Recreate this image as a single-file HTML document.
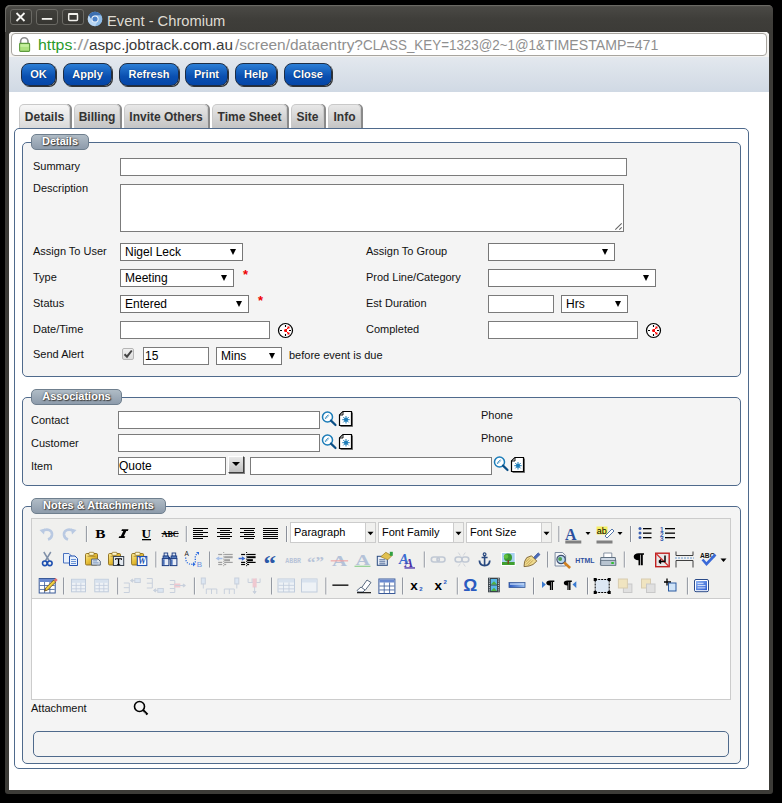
<!DOCTYPE html>
<html><head><meta charset="utf-8">
<style>
*{box-sizing:border-box;margin:0;padding:0}
html,body{width:782px;height:803px;overflow:hidden;background:#000;font-family:"Liberation Sans",sans-serif}
.a{position:absolute}
#win{left:5px;top:5px;width:768px;height:789px;background:#3c3b37;border-radius:5px 5px 3px 3px}
#tbar{left:5px;top:5px;width:768px;height:27px;border-radius:5px 5px 0 0;background:linear-gradient(#5b5a55 0,#4a4945 2px,#3f3e3a 14px,#3c3b37 27px);box-shadow:inset 1px 1px 0 #6a6964}
.wb{width:22px;height:16px;border:1px solid #6a6964;border-radius:3px;background:linear-gradient(#403f3b,#363531)}
#title{left:107px;top:13px;font-size:14.7px;color:#dfdbd2;white-space:pre}
#addr{left:9px;top:32px;width:760px;height:25px;background:#f4f3f1;clip-path:polygon(2px 0,758px 0,760px 2px,760px 25px,0 25px,0 2px)}
#abox{left:11px;top:33px;width:756px;height:23px;background:#fff;border:1px solid #a8a59f;border-radius:4px}
.u{transform-origin:0 0;top:37px;font-size:14.7px;white-space:pre;color:#8a8a8a}
#content{left:9px;top:57px;width:760px;height:733px;background:#fff}
#toolbar{left:9px;top:57px;width:760px;height:35px;background:linear-gradient(#e3e8ee,#d0d9e4)}
.btn{height:23px;top:63px;border-radius:8px;background:linear-gradient(#2b7ed6,#0a4fb0 60%,#0546a8);border:1px solid #1d2d45;box-shadow:1px 1px 0 #333;color:#fff;font-weight:bold;font-size:11px;text-align:center;line-height:21px;text-shadow:0 0 1px #001a40}
.tab{top:104px;height:24px;border:1px solid #c9c9c9;border-bottom:none;border-radius:5px 5px 0 0;background:linear-gradient(#e8e8e8,#c4c4c4);box-shadow:2px 0 0 #8a8a8a;font-weight:bold;font-size:12px;color:#333;line-height:24px;text-align:center}
.tab.act{background:linear-gradient(#f7f7f7,#d9d9d9)}
.panel{border:1px solid #4f6a8c;border-radius:5px}
.fs{border:1px solid #4f6a8c;border-radius:5px;background:#f4f4f4}
.lg{height:16px;border:1px solid #6f7f8e;border-radius:5px;background:linear-gradient(#b0bcc6,#8d9bab);color:#fff;font-weight:bold;font-size:11px;text-align:center;line-height:13px;text-shadow:0 0 2px #333,1px 1px 1px #444}
.lbl{font-size:11px;color:#111;white-space:pre}
.inp{background:#fff;border:1px solid #7b7b7b}
.sel{background:#fff;border:1px solid #777;font-size:12px;color:#000;padding-left:4px;line-height:17px;white-space:pre}
.arr{position:absolute;right:6px;top:5px;width:0;height:0;border-left:3.5px solid transparent;border-right:3.5px solid transparent;border-top:6px solid #000}
.ast{color:#e00;font-size:13px;font-weight:bold}
</style></head><body>
<div id="win" class="a"></div>
<div id="tbar" class="a"></div>
<div class="a wb" style="left:10px;top:9px"></div>
<div class="a wb" style="left:36px;top:9px"></div>
<div class="a wb" style="left:62px;top:9px"></div>
<div id="title" class="a">Event - Chromium</div>
<div id="addr" class="a"></div>
<div id="abox" class="a"></div>

<svg class="a" style="left:0;top:0" width="110" height="32" viewBox="0 0 110 32">
<path d="M16.5 13L24.5 21M24.5 13L16.5 21" stroke="#1e1d1b" stroke-width="3" opacity="0.5"/><path d="M16.5 13L24.5 21M24.5 13L16.5 21" stroke="#f6f5f2" stroke-width="1.9"/>
<rect x="41.8" y="18" width="10.4" height="1.8" fill="#f2f1ed"/>
<rect x="68.7" y="13.7" width="8.8" height="6.8" rx="1" fill="none" stroke="#f2f1ed" stroke-width="1.5"/><rect x="68.5" y="13" width="9.2" height="2" fill="#f2f1ed"/>
<circle cx="95" cy="19" r="7.2" fill="#9cc4ec"/><path d="M88.76 15.40 A7.2 7.2 0 0 1 101.24 15.40 L95.00 15.60 A3.4 3.4 0 0 0 92.06 20.70 Z" fill="#3d6fb0"/><path d="M101.24 15.40 A7.2 7.2 0 0 1 95.00 26.20 L97.94 20.70 A3.4 3.4 0 0 0 95.00 15.60 Z" fill="#8fbce8"/><path d="M95.00 26.20 A7.2 7.2 0 0 1 88.76 15.40 L92.06 20.70 A3.4 3.4 0 0 0 97.94 20.70 Z" fill="#b8d6f4"/><circle cx="95" cy="19" r="3.6" fill="#f4f8fc"/><circle cx="95" cy="19" r="2.6" fill="#4a80c8"/>
</svg>
<svg class="a" style="left:0;top:30px" width="40" height="26" viewBox="0 30 40 26"><path d="M20.6 44V41.5A3.7 3.7 0 0 1 28 41.5V44" fill="none" stroke="#8c8c8c" stroke-width="1.6"/><rect x="19.6" y="43.4" width="10" height="8" rx="0.8" fill="#aee27f" stroke="#5e9a3e" stroke-width="1.1"/><rect x="20.5" y="44.3" width="8.2" height="2.6" fill="#c6f09e"/></svg>
<div class="a u" style="left:37.5px;color:#2a9a2a;transform:scaleX(1.0786)">https</div><div class="a u" style="left:72.2px;color:#9a9a9a;transform:scaleX(1.3770)">://</div><div class="a u" style="left:89px;color:#3a3a3a;transform:scaleX(1.0375)">aspc.jobtrack.com.au</div><div class="a u" style="left:235px;color:#8f8f8f;transform:scaleX(1.0518)">/screen/dataentry?</div><div class="a u" style="left:363px;color:#8f8f8f;transform:scaleX(0.9114)">CLASS_KEY=1323@2~1@1&amp;</div><div class="a u" style="left:545px;color:#8f8f8f;transform:scaleX(0.9626)">TIMESTAMP=471</div>
<div id="content" class="a"></div>
<div id="toolbar" class="a"></div>

<div class="a btn" style="left:21px;width:35px">OK</div>
<div class="a btn" style="left:63px;width:49px">Apply</div>
<div class="a btn" style="left:119px;width:60px">Refresh</div>
<div class="a btn" style="left:185px;width:43px">Print</div>
<div class="a btn" style="left:235px;width:42px">Help</div>
<div class="a btn" style="left:284px;width:48px">Close</div>

<div class="a tab act" style="left:19px;width:51px">Details</div>
<div class="a tab" style="left:74px;width:46px">Billing</div>
<div class="a tab" style="left:124px;width:84px">Invite Others</div>
<div class="a tab" style="left:212px;width:75px">Time Sheet</div>
<div class="a tab" style="left:291px;width:33px">Site</div>
<div class="a tab" style="left:328px;width:33px">Info</div>

<div class="a panel" style="left:14px;top:128px;width:735px;height:641px"></div>

<!-- Details fieldset -->
<div class="a fs" style="left:22px;top:142px;width:719px;height:235px"></div>
<div class="a lg" style="left:31px;top:134px;width:58px">Details</div>

<div class="a lbl" style="left:33px;top:160px">Summary</div>
<div class="a inp" style="left:120px;top:158px;width:507px;height:18px"></div>
<div class="a lbl" style="left:33px;top:182px">Description</div>
<div class="a inp" style="left:120px;top:184px;width:504px;height:48px"></div>

<div class="a lbl" style="left:33px;top:245px">Assign To User</div>
<div class="a sel" style="left:120px;top:243px;width:123px;height:18px">Nigel Leck<i class="arr"></i></div>
<div class="a lbl" style="left:33px;top:271px">Type</div>
<div class="a sel" style="left:120px;top:269px;width:114px;height:18px">Meeting<i class="arr"></i></div>
<div class="a ast" style="left:243px;top:267px">*</div>
<div class="a lbl" style="left:33px;top:297px">Status</div>
<div class="a sel" style="left:120px;top:295px;width:129px;height:18px">Entered<i class="arr"></i></div>
<div class="a ast" style="left:258px;top:293px">*</div>
<div class="a lbl" style="left:33px;top:323px">Date/Time</div>
<div class="a inp" style="left:120px;top:321px;width:150px;height:18px"></div>
<div class="a lbl" style="left:33px;top:348px">Send Alert</div>
<div class="a inp" style="left:143px;top:347px;width:66px;height:18px;font-size:12px;line-height:16px;padding-left:1px">15</div>
<div class="a sel" style="left:216px;top:347px;width:66px;height:18px">Mins<i class="arr"></i></div>
<div class="a lbl" style="left:289px;top:349px">before event is due</div>

<div class="a lbl" style="left:366px;top:245px">Assign To Group</div>
<div class="a sel" style="left:488px;top:243px;width:127px;height:18px"><i class="arr"></i></div>
<div class="a lbl" style="left:366px;top:271px">Prod Line/Category</div>
<div class="a sel" style="left:488px;top:269px;width:168px;height:18px"><i class="arr"></i></div>
<div class="a lbl" style="left:366px;top:297px">Est Duration</div>
<div class="a inp" style="left:488px;top:295px;width:66px;height:18px"></div>
<div class="a sel" style="left:561px;top:295px;width:67px;height:18px">Hrs<i class="arr"></i></div>
<div class="a lbl" style="left:366px;top:323px">Completed</div>
<div class="a inp" style="left:488px;top:321px;width:150px;height:18px"></div>
<svg class="a" style="left:277px;top:322px" width="17" height="17" viewBox="0 0 17 17"><circle cx="8.5" cy="8.5" r="7" fill="#fff" stroke="#000" stroke-width="1.2"/><path d="M8.5 3v2M8.5 12v2M3 8.5h2M12 8.5h2" stroke="#000" stroke-width="1.1"/><path d="M8.5 8.5L11.5 5.5M8.5 8.5L11.5 11.5" stroke="#f00" stroke-width="1"/><circle cx="8.5" cy="8.5" r="1.5" fill="#f00"/><rect x="10.5" y="4.5" width="2" height="2" fill="#f00"/><rect x="10.5" y="10.5" width="2" height="2" fill="#f00"/></svg><svg class="a" style="left:645px;top:322px" width="17" height="17" viewBox="0 0 17 17"><circle cx="8.5" cy="8.5" r="7" fill="#fff" stroke="#000" stroke-width="1.2"/><path d="M8.5 3v2M8.5 12v2M3 8.5h2M12 8.5h2" stroke="#000" stroke-width="1.1"/><path d="M8.5 8.5L11.5 5.5M8.5 8.5L11.5 11.5" stroke="#f00" stroke-width="1"/><circle cx="8.5" cy="8.5" r="1.5" fill="#f00"/><rect x="10.5" y="4.5" width="2" height="2" fill="#f00"/><rect x="10.5" y="10.5" width="2" height="2" fill="#f00"/></svg>
<div class="a" style="left:122px;top:348px;width:12px;height:12px;border:1px solid #b5b5b5;border-radius:2px;background:linear-gradient(#f0f0f0,#dcdcdc)"></div>
<svg class="a" style="left:122px;top:348px" width="12" height="12" viewBox="0 0 12 12"><path d="M2.5 6.2L5 8.7L9.8 2.5" fill="none" stroke="#444" stroke-width="2"/></svg>
<svg class="a" style="left:612px;top:220px" width="11" height="11" viewBox="0 0 11 11"><path d="M3.3 9.7L9.7 3.3M7.3 9.7L9.7 7.3" stroke="#666" stroke-width="1.1"/></svg>

<div class="a fs" style="left:22px;top:397px;width:719px;height:89px"></div>
<div class="a lg" style="left:31px;top:389px;width:91px">Associations</div>
<div class="a lbl" style="left:31px;top:414px">Contact</div>
<div class="a inp" style="left:118px;top:411px;width:202px;height:18px"></div>
<div class="a lbl" style="left:31px;top:437px">Customer</div>
<div class="a inp" style="left:118px;top:434px;width:202px;height:18px"></div>
<div class="a lbl" style="left:31px;top:460px">Item</div>
<div class="a inp" style="left:118px;top:457px;width:108px;height:18px;font-size:12px;line-height:16px;padding-left:0px;color:#000">Quote</div>
<div class="a" style="left:228px;top:456px;width:16px;height:17px;background:linear-gradient(#e8e8e8,#c0c0c0);border:1px solid;border-color:#fff #404040 #404040 #fff;box-shadow:1px 1px 0 #808080"></div>
<div class="a" style="left:232px;top:462px;width:0;height:0;border-left:4px solid transparent;border-right:4px solid transparent;border-top:4px solid #000"></div>
<div class="a inp" style="left:250px;top:457px;width:242px;height:18px"></div>
<div class="a lbl" style="left:481px;top:409px">Phone</div>
<div class="a lbl" style="left:481px;top:432px">Phone</div>
<svg class="a" style="left:321px;top:411px" width="17" height="17" viewBox="0 0 17 17"><circle cx="6.5" cy="6" r="5" fill="#fff" stroke="#1b7cb8" stroke-width="1.5"/><path d="M4.2 7.5L7.8 3.9" stroke="#1b7cb8" stroke-width="1.6" stroke-dasharray="1 0.6"/><path d="M10 9.6L14.5 14" stroke="#0b4f86" stroke-width="2.2" stroke-linecap="round"/></svg><svg class="a" style="left:338px;top:410px" width="16" height="17" viewBox="0 0 16 17"><path d="M5 1.5H13.5V15.5H1.5V5Z" fill="#fff" stroke="#000" stroke-width="1.2"/><path d="M14.5 2.5V16.5H2.5" fill="none" stroke="#000" stroke-width="1" opacity="0.55"/><path d="M1.5 5L5 1.5V5Z" fill="#e8e8e8" stroke="#000" stroke-width="0.9"/><g stroke="#1b7cb8" stroke-width="1"><path d="M8 6V13.5M4.3 9.7H11.7M5.3 7L10.7 12.4M10.7 7L5.3 12.4"/></g><circle cx="8" cy="9.7" r="2" fill="#1b7cb8"/></svg><svg class="a" style="left:321px;top:434px" width="17" height="17" viewBox="0 0 17 17"><circle cx="6.5" cy="6" r="5" fill="#fff" stroke="#1b7cb8" stroke-width="1.5"/><path d="M4.2 7.5L7.8 3.9" stroke="#1b7cb8" stroke-width="1.6" stroke-dasharray="1 0.6"/><path d="M10 9.6L14.5 14" stroke="#0b4f86" stroke-width="2.2" stroke-linecap="round"/></svg><svg class="a" style="left:338px;top:433px" width="16" height="17" viewBox="0 0 16 17"><path d="M5 1.5H13.5V15.5H1.5V5Z" fill="#fff" stroke="#000" stroke-width="1.2"/><path d="M14.5 2.5V16.5H2.5" fill="none" stroke="#000" stroke-width="1" opacity="0.55"/><path d="M1.5 5L5 1.5V5Z" fill="#e8e8e8" stroke="#000" stroke-width="0.9"/><g stroke="#1b7cb8" stroke-width="1"><path d="M8 6V13.5M4.3 9.7H11.7M5.3 7L10.7 12.4M10.7 7L5.3 12.4"/></g><circle cx="8" cy="9.7" r="2" fill="#1b7cb8"/></svg><svg class="a" style="left:493px;top:456px" width="17" height="17" viewBox="0 0 17 17"><circle cx="6.5" cy="6" r="5" fill="#fff" stroke="#1b7cb8" stroke-width="1.5"/><path d="M4.2 7.5L7.8 3.9" stroke="#1b7cb8" stroke-width="1.6" stroke-dasharray="1 0.6"/><path d="M10 9.6L14.5 14" stroke="#0b4f86" stroke-width="2.2" stroke-linecap="round"/></svg><svg class="a" style="left:510px;top:456px" width="16" height="17" viewBox="0 0 16 17"><path d="M5 1.5H13.5V15.5H1.5V5Z" fill="#fff" stroke="#000" stroke-width="1.2"/><path d="M14.5 2.5V16.5H2.5" fill="none" stroke="#000" stroke-width="1" opacity="0.55"/><path d="M1.5 5L5 1.5V5Z" fill="#e8e8e8" stroke="#000" stroke-width="0.9"/><g stroke="#1b7cb8" stroke-width="1"><path d="M8 6V13.5M4.3 9.7H11.7M5.3 7L10.7 12.4M10.7 7L5.3 12.4"/></g><circle cx="8" cy="9.7" r="2" fill="#1b7cb8"/></svg><!--NOTES-->
<div class="a fs" style="left:22px;top:506px;width:719px;height:258px"></div>
<div class="a lg" style="left:31px;top:498px;width:135px">Notes &amp; Attachments</div>
<div class="a" style="left:31px;top:518px;width:700px;height:182px;background:#f0f0ee;border:1px solid #ccc"></div>
<div class="a" style="left:31px;top:598px;width:700px;height:102px;background:#fff;border:1px solid #ccc"></div>
<div class="a lbl" style="left:31px;top:702px">Attachment</div>
<svg class="a" style="left:133px;top:700px" width="16" height="16" viewBox="0 0 16 16"><circle cx="6.5" cy="6.5" r="5" fill="none" stroke="#000" stroke-width="1.6"/><path d="M10 10L14.5 14.5" stroke="#000" stroke-width="2.2"/><path d="M10.5 11.5L13 14" stroke="#888" stroke-width="0.8"/></svg>
<div class="a" style="left:33px;top:731px;width:696px;height:26px;border:1px solid #4f6a8c;border-radius:5px;background:#f4f4f4"></div>
<div class="a" style="left:290px;top:522px;width:76px;height:21px;background:#fff;border:1px solid #ccc;font-size:11px;line-height:18px;padding-left:3px;color:#000;white-space:pre">Paragraph</div><div class="a" style="left:365px;top:522px;width:11px;height:21px;background:#f0f0ee;border:1px solid #ccc"></div><div class="a" style="left:378px;top:522px;width:76px;height:21px;background:#fff;border:1px solid #ccc;font-size:11px;line-height:18px;padding-left:3px;color:#000;white-space:pre">Font Family</div><div class="a" style="left:453px;top:522px;width:11px;height:21px;background:#f0f0ee;border:1px solid #ccc"></div><div class="a" style="left:466px;top:522px;width:76px;height:21px;background:#fff;border:1px solid #ccc;font-size:11px;line-height:18px;padding-left:3px;color:#000;white-space:pre">Font Size</div><div class="a" style="left:541px;top:522px;width:11px;height:21px;background:#f0f0ee;border:1px solid #ccc"></div><svg class="a" style="left:0;top:0" width="782" height="803" viewBox="0 0 782 803"><rect x="85.9" y="526" width="1" height="16" fill="#8a8f99"/><rect x="86.9" y="526" width="1" height="16" fill="#fff" opacity="0.6"/><rect x="185.8" y="526" width="1" height="16" fill="#8a8f99"/><rect x="186.8" y="526" width="1" height="16" fill="#fff" opacity="0.6"/><rect x="286.0" y="526" width="1" height="16" fill="#8a8f99"/><rect x="287.0" y="526" width="1" height="16" fill="#fff" opacity="0.6"/><rect x="558.4" y="526" width="1" height="16" fill="#8a8f99"/><rect x="559.4" y="526" width="1" height="16" fill="#fff" opacity="0.6"/><rect x="630.0" y="526" width="1" height="16" fill="#8a8f99"/><rect x="631.0" y="526" width="1" height="16" fill="#fff" opacity="0.6"/><rect x="155.4" y="551.5" width="1" height="16.0" fill="#8a8f99"/><rect x="156.4" y="551.5" width="1" height="16.0" fill="#fff" opacity="0.6"/><rect x="209.1" y="551.5" width="1" height="16.0" fill="#8a8f99"/><rect x="210.1" y="551.5" width="1" height="16.0" fill="#fff" opacity="0.6"/><rect x="423.8" y="551.5" width="1" height="16.0" fill="#8a8f99"/><rect x="424.8" y="551.5" width="1" height="16.0" fill="#fff" opacity="0.6"/><rect x="547.1" y="551.5" width="1" height="16.0" fill="#8a8f99"/><rect x="548.1" y="551.5" width="1" height="16.0" fill="#fff" opacity="0.6"/><rect x="623.8" y="551.5" width="1" height="16.0" fill="#8a8f99"/><rect x="624.8" y="551.5" width="1" height="16.0" fill="#fff" opacity="0.6"/><rect x="63.1" y="577.5" width="1" height="17.0" fill="#8a8f99"/><rect x="64.1" y="577.5" width="1" height="17.0" fill="#fff" opacity="0.6"/><rect x="117.2" y="577.5" width="1" height="17.0" fill="#8a8f99"/><rect x="118.2" y="577.5" width="1" height="17.0" fill="#fff" opacity="0.6"/><rect x="193.9" y="577.5" width="1" height="17.0" fill="#8a8f99"/><rect x="194.9" y="577.5" width="1" height="17.0" fill="#fff" opacity="0.6"/><rect x="271.1" y="577.5" width="1" height="17.0" fill="#8a8f99"/><rect x="272.1" y="577.5" width="1" height="17.0" fill="#fff" opacity="0.6"/><rect x="325.4" y="577.5" width="1" height="17.0" fill="#8a8f99"/><rect x="326.4" y="577.5" width="1" height="17.0" fill="#fff" opacity="0.6"/><rect x="402.1" y="577.5" width="1" height="17.0" fill="#8a8f99"/><rect x="403.1" y="577.5" width="1" height="17.0" fill="#fff" opacity="0.6"/><rect x="456.8" y="577.5" width="1" height="17.0" fill="#8a8f99"/><rect x="457.8" y="577.5" width="1" height="17.0" fill="#fff" opacity="0.6"/><rect x="533.0" y="577.5" width="1" height="17.0" fill="#8a8f99"/><rect x="534.0" y="577.5" width="1" height="17.0" fill="#fff" opacity="0.6"/><rect x="587.0" y="577.5" width="1" height="17.0" fill="#8a8f99"/><rect x="588.0" y="577.5" width="1" height="17.0" fill="#fff" opacity="0.6"/><rect x="686.9" y="577.5" width="1" height="17.0" fill="#8a8f99"/><rect x="687.9" y="577.5" width="1" height="17.0" fill="#fff" opacity="0.6"/><g transform="translate(39.5,527.5)"><path d="M3 3.5 C8 0.5 13 3 12.5 7.5 C12 10.5 10 11.5 8.5 12" fill="none" stroke="#b9c9e2" stroke-width="2.6"/><path d="M0 2.5 L5.5 1 L4.5 7 Z" fill="#b9c9e2"/></g><g transform="translate(64,527.5)"><path d="M9.5 3.5 C4.5 0.5 -0.5 3 0 7.5 C0.5 10.5 2.5 11.5 4 12" fill="none" stroke="#b9c9e2" stroke-width="2.6"/><path d="M12.5 2.5 L7 1 L8 7 Z" fill="#b9c9e2"/></g><text x="95.2" y="538.2" font-family="Liberation Serif" font-weight="bold" font-size="12.5" fill="#000" textLength="10.2" lengthAdjust="spacingAndGlyphs">B</text><path d="M122 529.3 H128.5 L127.8 531 H126.3 L123.8 536.2 H125.3 L124.6 538 H118.6 L119.3 536.2 H120.8 L123.3 531 H121.3 Z" fill="#000"/><text x="141.6" y="537.8" font-family="Liberation Serif" font-weight="bold" font-size="12.5" fill="#000" textLength="9.5" lengthAdjust="spacingAndGlyphs">U</text><rect x="142" y="539" width="9" height="1.3" fill="#000"/><text x="161.7" y="537" font-family="Liberation Serif" font-weight="bold" font-size="8.5" fill="#000" textLength="17" lengthAdjust="spacingAndGlyphs">ABC</text><rect x="161.5" y="533" width="17.2" height="1" fill="#000"/><rect x="193" y="528" width="15" height="1" fill="#000"/><rect x="193" y="530" width="10" height="1" fill="#000"/><rect x="193" y="532" width="15" height="1" fill="#000"/><rect x="193" y="534" width="10" height="1" fill="#000"/><rect x="193" y="536" width="15" height="1" fill="#000"/><rect x="193" y="538" width="10" height="1" fill="#000"/><rect x="217" y="528" width="15" height="1" fill="#000"/><rect x="220" y="530" width="10" height="1" fill="#000"/><rect x="217" y="532" width="15" height="1" fill="#000"/><rect x="220" y="534" width="10" height="1" fill="#000"/><rect x="217" y="536" width="15" height="1" fill="#000"/><rect x="220" y="538" width="10" height="1" fill="#000"/><rect x="240" y="528" width="15" height="1" fill="#000"/><rect x="244" y="530" width="10" height="1" fill="#000"/><rect x="240" y="532" width="15" height="1" fill="#000"/><rect x="244" y="534" width="10" height="1" fill="#000"/><rect x="240" y="536" width="15" height="1" fill="#000"/><rect x="244" y="538" width="10" height="1" fill="#000"/><rect x="263" y="528" width="15" height="1" fill="#000"/><rect x="263" y="530" width="15" height="1" fill="#000"/><rect x="263" y="532" width="15" height="1" fill="#000"/><rect x="263" y="534" width="15" height="1" fill="#000"/><rect x="263" y="536" width="15" height="1" fill="#000"/><rect x="263" y="538" width="15" height="1" fill="#000"/><path d="M367.5 531.7 h6 l-3 3.6 z" fill="#000"/><path d="M455.5 531.7 h6 l-3 3.6 z" fill="#000"/><path d="M543.5 531.7 h6 l-3 3.6 z" fill="#000"/><text x="565" y="540" font-family="Liberation Serif" font-weight="bold" font-size="16" fill="#2b4f9e">A</text><rect x="565.3" y="540.5" width="16" height="3" fill="#808080"/><path d="M585.5 532 h5 l-2.5 3 z" fill="#000"/><rect x="596.5" y="526.5" width="11" height="8" fill="#f5ee60"/><text x="596.8" y="533.5" font-family="Liberation Sans" font-size="9" fill="#000">ab</text><path d="M605 536 L612 529 L614 531 L607 538 Z" fill="#fff" stroke="#5577aa" stroke-width="1"/><rect x="596.5" y="540.5" width="16" height="3" fill="#808080"/><path d="M617.5 532 h5 l-2.5 3 z" fill="#000"/><circle cx="640" cy="528.5" r="1.5" fill="#3b5fb0"/><rect x="643" y="528.0" width="8.5" height="1.3" fill="#000"/><circle cx="640" cy="533.0" r="1.5" fill="#3b5fb0"/><rect x="643" y="532.5" width="8.5" height="1.3" fill="#000"/><circle cx="640" cy="537.5" r="1.5" fill="#3b5fb0"/><rect x="643" y="537.0" width="8.5" height="1.3" fill="#000"/><text x="660" y="532.2" font-family="Liberation Sans" font-weight="bold" font-size="6.5" fill="#3b5fb0">1</text><rect x="665" y="528.0" width="10" height="1.3" fill="#000"/><text x="660" y="536.6" font-family="Liberation Sans" font-weight="bold" font-size="6.5" fill="#3b5fb0">2</text><rect x="665" y="532.5" width="10" height="1.3" fill="#000"/><text x="660" y="541.0" font-family="Liberation Sans" font-weight="bold" font-size="6.5" fill="#3b5fb0">3</text><rect x="665" y="537.0" width="10" height="1.3" fill="#000"/><g transform="translate(41.8,552)"><path d="M2 0 L7.5 9 M9 0 L3.5 9" stroke="#8090a8" stroke-width="1.5"/><circle cx="3" cy="11.3" r="2.3" fill="none" stroke="#1d4fb0" stroke-width="1.6"/><circle cx="8" cy="11.3" r="2.3" fill="none" stroke="#1d4fb0" stroke-width="1.6"/></g><g transform="translate(63,553)"><path d="M0.5 0.5 H6 L8.5 3 V10 H0.5 Z" fill="#e8f0fb" stroke="#4a72c0"/><path d="M6.5 3 H12 L14.5 5.5 V12.5 H6.5 Z" fill="#e8f0fb" stroke="#2050b0"/><path d="M8 6.5h5M8 8.5h5M8 10.5h5" stroke="#5a88d0" stroke-width="0.9"/></g><g transform="translate(85,552)"><defs><linearGradient id="cg85" x1="0" y1="0" x2="1" y2="1"><stop offset="0" stop-color="#fff0a0"/><stop offset="0.45" stop-color="#e8c038"/><stop offset="1" stop-color="#b08418"/></linearGradient></defs><rect x="0.5" y="1.5" width="12" height="11.5" rx="1.2" fill="url(#cg85)" stroke="#8a6a18" stroke-width="0.9"/><rect x="4" y="0.3" width="5" height="3" rx="0.8" fill="#fff8d0" stroke="#8a6a18" stroke-width="0.7"/><rect x="2.5" y="3.8" width="8" height="1" fill="#7a5a20" opacity="0.5"/></g><g transform="translate(91.1,558.6)"><path d="M0.5 0.5 H7 L9.2 2.7 V6.5 H0.5 Z" fill="#dfe6ee" stroke="#4a5a70" stroke-width="0.9"/><path d="M2 2.3h4M2 4.3h5.5" stroke="#6a88b8" stroke-width="0.9"/></g><g transform="translate(108,552)"><defs><linearGradient id="cg108" x1="0" y1="0" x2="1" y2="1"><stop offset="0" stop-color="#fff0a0"/><stop offset="0.45" stop-color="#e8c038"/><stop offset="1" stop-color="#b08418"/></linearGradient></defs><rect x="0.5" y="1.5" width="12" height="11.5" rx="1.2" fill="url(#cg108)" stroke="#8a6a18" stroke-width="0.9"/><rect x="4" y="0.3" width="5" height="3" rx="0.8" fill="#fff8d0" stroke="#8a6a18" stroke-width="0.7"/><rect x="2.5" y="3.8" width="8" height="1" fill="#7a5a20" opacity="0.5"/></g><g transform="translate(112.9,556)"><rect x="0.5" y="0.5" width="10.3" height="9" fill="#e4eaf0" stroke="#3a4450" stroke-width="1"/><path d="M2.3 2.2 H9 V4 H8.2 V3.2 H6.3 V8.3 H7.3 V9 H4 V8.3 H5 V3.2 H3.1 V4 H2.3 Z" fill="#000"/></g><g transform="translate(131.1,552)"><defs><linearGradient id="cg131" x1="0" y1="0" x2="1" y2="1"><stop offset="0" stop-color="#fff0a0"/><stop offset="0.45" stop-color="#e8c038"/><stop offset="1" stop-color="#b08418"/></linearGradient></defs><rect x="0.5" y="1.5" width="12" height="11.5" rx="1.2" fill="url(#cg131)" stroke="#8a6a18" stroke-width="0.9"/><rect x="4" y="0.3" width="5" height="3" rx="0.8" fill="#fff8d0" stroke="#8a6a18" stroke-width="0.7"/><rect x="2.5" y="3.8" width="8" height="1" fill="#7a5a20" opacity="0.5"/></g><g transform="translate(136.8,556)"><rect x="0.5" y="0.5" width="9.5" height="9" fill="#fff" stroke="#2050b0" stroke-width="1.1"/><text x="1.2" y="8.3" font-family="Liberation Serif" font-weight="bold" font-style="italic" font-size="9.5" fill="#2050b0" textLength="8" lengthAdjust="spacingAndGlyphs">W</text></g><rect x="164.10000000000002" y="553" width="3.6" height="3.2" fill="#dce6f4" stroke="#1a3a80" stroke-width="0.9"/><rect x="163.10000000000002" y="556" width="5.6" height="2.8" fill="#5a80c0" stroke="#1a3a80" stroke-width="0.9"/><rect x="162.3" y="558.6" width="6.6" height="7" fill="#e8eef8" stroke="#1a3a80" stroke-width="1"/><rect x="163.0" y="559.3" width="1.6" height="5.6" fill="#4a70b8"/><rect x="172.10000000000002" y="553" width="3.6" height="3.2" fill="#dce6f4" stroke="#1a3a80" stroke-width="0.9"/><rect x="171.10000000000002" y="556" width="5.6" height="2.8" fill="#5a80c0" stroke="#1a3a80" stroke-width="0.9"/><rect x="170.3" y="558.6" width="6.6" height="7" fill="#e8eef8" stroke="#1a3a80" stroke-width="1"/><rect x="171.0" y="559.3" width="1.6" height="5.6" fill="#4a70b8"/><rect x="168.3" y="557" width="2" height="2.5" fill="#1a3a80"/><text x="184.6" y="556" font-family="Liberation Sans" font-size="6.5" fill="#222">A</text><path d="M185.7 557.5 C185.7 562 187.5 564.3 192.5 564.3" fill="none" stroke="#2a6ae0" stroke-width="1.3" stroke-dasharray="1.2 1.3"/><path d="M193 562 L195.6 564.3 L193 566.5Z" fill="#2a6ae0"/><path d="M195.3 562.5 V556 L197.5 553" fill="none" stroke="#2a6ae0" stroke-width="1.3" stroke-dasharray="1.2 1.3"/><path d="M196 552 H199 V555 Z" fill="#2a6ae0"/><text x="196.8" y="566.6" font-family="Liberation Sans" font-size="8" fill="#6a90e0">B</text><path d="M223.7 552v15" stroke="#a0a0a0" stroke-width="1" stroke-dasharray="1 1.2"/><rect x="218.2" y="553.9" width="4" height="1.2" fill="#a0a0a0"/><rect x="218.2" y="561.8" width="4" height="1.2" fill="#a0a0a0"/><rect x="218.2" y="563.9" width="4" height="1.2" fill="#a0a0a0"/><rect x="224.2" y="553.9" width="8.5" height="1.2" fill="#a0a0a0"/><rect x="224.2" y="556.2" width="8.5" height="2" fill="#a0a0a0"/><rect x="224.2" y="559.2" width="5.8" height="2" fill="#a0a0a0"/><rect x="224.2" y="561.8" width="8.5" height="1.2" fill="#a0a0a0"/><rect x="224.2" y="563.9" width="2" height="1.2" fill="#a0a0a0"/><path d="M215.7 558.5 L219.2 556.3 V557.8 H222.5 V559.2 H219.2 V560.7Z" fill="#a8c0e8"/><path d="M246.6 552v15" stroke="#000" stroke-width="1" stroke-dasharray="1 1.2"/><rect x="241.1" y="553.9" width="4" height="1.2" fill="#000"/><rect x="241.1" y="561.8" width="4" height="1.2" fill="#000"/><rect x="241.1" y="563.9" width="4" height="1.2" fill="#000"/><rect x="247.1" y="553.9" width="8.5" height="1.2" fill="#000"/><rect x="247.1" y="556.2" width="8.5" height="2" fill="#000"/><rect x="247.1" y="559.2" width="5.8" height="2" fill="#000"/><rect x="247.1" y="561.8" width="8.5" height="1.2" fill="#000"/><rect x="247.1" y="563.9" width="2" height="1.2" fill="#000"/><path d="M245.4 558.5 L241.9 556.3 V557.8 H238.6 V559.2 H241.9 V560.7Z" fill="#3a6ad0"/><text x="263.5" y="571" font-family="Liberation Serif" font-weight="bold" font-size="23" fill="#2a58a8" textLength="12.5" lengthAdjust="spacingAndGlyphs">“</text><text x="285.3" y="562.5" font-family="Liberation Mono" font-weight="bold" font-size="6.5" fill="#b8c4d8" textLength="15.7" lengthAdjust="spacingAndGlyphs">ABBR</text><text x="307" y="567" font-family="Liberation Serif" font-weight="bold" font-size="14" fill="#b8c4d8" textLength="17" lengthAdjust="spacingAndGlyphs">“”</text><text x="332" y="566" font-family="Liberation Serif" font-weight="bold" font-size="15" fill="#b4c2d8" textLength="15" lengthAdjust="spacingAndGlyphs">A</text><rect x="330.7" y="560.3" width="17.4" height="1.1" fill="#f0a0a0"/><text x="355.5" y="565" font-family="Liberation Serif" font-weight="bold" font-size="15" fill="#b4c2d8" textLength="14.5" lengthAdjust="spacingAndGlyphs">A</text><rect x="354.5" y="565.7" width="16" height="1.2" fill="#90d090"/><g transform="translate(376.8,551.8)"><rect x="0.5" y="4.5" width="10" height="9" fill="#e8eef8" stroke="#2a4a80"/><path d="M2.5 8h6M2.5 10h6M2.5 12h6" stroke="#2a4a80" stroke-width="0.8"/><path d="M4 5 L9 0.5 L15 4 L11 8 Z" fill="#e0c050" stroke="#9a7a20" stroke-width="0.7"/><rect x="13" y="0" width="3" height="4" fill="#30a040"/></g><text x="399" y="563.5" font-family="Liberation Serif" font-weight="bold" font-style="italic" font-size="14.5" fill="#3a6ad0">A</text><text x="404.5" y="566.5" font-family="Liberation Serif" font-weight="bold" font-style="italic" font-size="13" fill="#4a30a8">A</text><rect x="404.5" y="567.3" width="10.5" height="1.3" fill="#4a30a8"/><g transform="translate(430.5,556)"><rect x="0.8" y="1" width="8" height="5" rx="2.5" fill="none" stroke="#c0c8d4" stroke-width="1.6"/><rect x="6.5" y="1" width="8" height="5" rx="2.5" fill="none" stroke="#c0c8d4" stroke-width="1.6"/></g><g transform="translate(454.3,552.5)"><rect x="0.8" y="4.5" width="7" height="5" rx="2.5" fill="none" stroke="#c0c8d4" stroke-width="1.6"/><rect x="7.5" y="4.5" width="7" height="5" rx="2.5" fill="none" stroke="#c0c8d4" stroke-width="1.6"/><path d="M4 0l2 3M11 0l-2 3M4 14l2-3M11 14l-2-3" stroke="#c8ccd4" stroke-width="0.8"/></g><g transform="translate(478.6,552.5)"><circle cx="6" cy="1.8" r="1.4" fill="none" stroke="#2a4a80" stroke-width="1.2"/><path d="M6 3v10M3 5h6" stroke="#2a4a80" stroke-width="1.6"/><path d="M0.8 8 C1 12 4 13 6 13 C8 13 11 12 11.2 8" fill="none" stroke="#2a4a80" stroke-width="1.8"/></g><g transform="translate(501,552)"><rect x="0" y="0" width="14.7" height="14" fill="#fff"/><rect x="1" y="1" width="12.7" height="10" fill="#a8d0f0"/><rect x="1" y="10" width="12.7" height="3" fill="#40a030"/><circle cx="7" cy="5.5" r="4" fill="#3a9a30"/><circle cx="5" cy="4.5" r="2.2" fill="#60c040"/><rect x="6.5" y="8" width="1.5" height="4" fill="#7a4a20"/></g><g transform="translate(523,552)"><path d="M10.5 5.5 L15.2 0.8 L17 2.6 L12.3 7.3Z" fill="#4a6ab8" stroke="#2a4a90" stroke-width="0.6"/><path d="M8.5 3.8 L13.8 9.1 L10 12.5 L6 14 L1 14.6 L1.6 9.5 L3.8 5.6Z" fill="#f0dc90" stroke="#7a6030" stroke-width="0.9"/><path d="M3 12.5 L8 7.5 M5 13.3 L10 8.3 M2.2 10.5 L6.5 6.2" stroke="#b89040" stroke-width="0.8"/></g><g transform="translate(554.6,552)"><path d="M0.5 0.5 H8 L11 3.5 V14 H0.5 Z" fill="#f4f6f8" stroke="#708098" stroke-width="0.9"/><circle cx="6.5" cy="7.5" r="4.2" fill="#b8d8f0" stroke="#405070" stroke-width="1.2"/><circle cx="5.5" cy="7" r="2" fill="#50a050"/><path d="M9.5 10.5 L15.5 16" stroke="#d08020" stroke-width="2.6"/></g><text x="575.2" y="563" font-family="Liberation Sans" font-weight="bold" font-size="8" fill="#3050a0" textLength="19.3" lengthAdjust="spacingAndGlyphs">HTML</text><g transform="translate(599.8,552.5)"><path d="M4 0.5 H12 V5 H4Z" fill="#fff" stroke="#7a8898" stroke-width="0.9"/><path d="M1 5 H15.5 L16 12 H0.5 Z" fill="#d0dae6" stroke="#607080" stroke-width="1"/><rect x="1" y="8" width="15" height="5" fill="#b8c4d0" stroke="#607080" stroke-width="0.8"/><rect x="11.5" y="9.5" width="2.5" height="2" fill="#30c030"/></g><path d="M638.5 553.2 H644 V554.8 H642.8 V565.3 H641 V554.8 H640.3 V565.3 H638.5 V560.2 C635.8 560.2 633.7 558.8 633.7 556.7 C633.7 554.6 635.8 553.2 638.5 553.2 Z" fill="#000"/><g transform="translate(655,552.5)"><rect x="0.7" y="0.7" width="13.5" height="13.5" fill="#e8e8e8" stroke="#c02020" stroke-width="1.4"/><path d="M1 1 L14 14" stroke="#d03030" stroke-width="1.3"/><path d="M10 3 V9 H4 M4 9 l2 -2 M4 9 l2 2" fill="none" stroke="#000" stroke-width="1.5"/></g><g transform="translate(675,551)"><path d="M1 0.5 V4.5 H18 V0.5" fill="none" stroke="#404040" stroke-width="1"/><path d="M0 7 H19" stroke="#6a9ad0" stroke-width="1.2" stroke-dasharray="2 1"/><path d="M1 16.5 V9.5 H18 V16.5" fill="none" stroke="#404040" stroke-width="1"/></g><text x="700" y="558" font-family="Liberation Sans" font-weight="bold" font-size="7.5" fill="#111" textLength="14.5" lengthAdjust="spacingAndGlyphs">ABC</text><path d="M702.5 559.5 L706.5 564 L715.5 554.5" fill="none" stroke="#3a6ad8" stroke-width="2.6"/><path d="M720.5 558.5 h6 l-3 3.5 z" fill="#000"/><g transform="translate(38.7,578)"><rect x="0.5" y="0.5" width="16" height="14.5" fill="#fff" stroke="#3a5a98"/><rect x="1" y="1" width="15" height="3" fill="#6a8ad0"/><path d="M1 7.525h15M1 11.44h15M5.833333333333333 4v11.0M11.166666666666666 4v11.0" stroke="#3a5a98" stroke-width="0.8"/><path d="M7 10 L15 2 L17 4 L9 12 L6 13 Z" fill="#f0d040" stroke="#604010" stroke-width="0.8"/><path d="M15 2 L17 0 L19 2 L17 4Z" fill="#e07070"/></g><g transform="translate(71,578.8)"><rect x="0.5" y="0.5" width="14" height="12.5" fill="#eef2f6" stroke="#c0ccdc"/><rect x="1" y="1" width="13" height="3" fill="#d8e2ee"/><path d="M1 6.625h13M1 10.0h13M5.166666666666667 4v9.0M9.833333333333334 4v9.0" stroke="#c0ccdc" stroke-width="0.8"/></g><g transform="translate(94.3,578.8)"><rect x="0.5" y="0.5" width="13.5" height="12.5" fill="#eef2f6" stroke="#c0ccdc"/><rect x="1" y="1" width="12.5" height="3" fill="#d8e2ee"/><path d="M1 6.625h12.5M1 10.0h12.5M5.0 4v9.0M9.5 4v9.0" stroke="#c0ccdc" stroke-width="0.8"/></g><g transform="translate(123.3,577.5)"><path d="M0.5 5.5h5.5v9.5h-5.5M0.5 10.2h5.5" fill="none" stroke="#c8d0dc" stroke-width="1"/><rect x="11.5" y="1.2" width="5.5" height="3.8" fill="#dce6f2" stroke="#c8d0dc"/><path d="M7.5 3.1h4M7.2 3.1l2.2-1.6v3.2z" stroke="#c8d0dc" fill="#c8d0dc"/></g><g transform="translate(146.3,577.5)"><path d="M0.5 1h5.5v9.5h-5.5M0.5 5.7h5.5" fill="none" stroke="#c8d0dc" stroke-width="1"/><rect x="11.5" y="11" width="5.5" height="3.8" fill="#dce6f2" stroke="#c8d0dc"/><path d="M7.5 12.9h4M7.2 12.9l2.2-1.6v3.2z" stroke="#c8d0dc" fill="#c8d0dc"/></g><g transform="translate(169.3,577.5)"><path d="M0.5 3h5v12h-5M0.5 7h5M0.5 11h5" fill="none" stroke="#c8d0dc" stroke-width="1"/><rect x="5" y="6" width="6" height="4" fill="#f0c8d0"/><path d="M6 8h10M16 8l-2-1.5v3z" stroke="#c8d0dc" fill="#c8d0dc"/></g><g transform="translate(200.8,577.5)"><path d="M5.5 16.5v-5h10.5v5M10.7 11.5v5" fill="none" stroke="#c8d0dc" stroke-width="1"/><rect x="0.5" y="0.5" width="4" height="6" fill="#dce6f2" stroke="#c8d0dc"/><path d="M2.5 6v5" stroke="#c8d0dc"/></g><g transform="translate(223.8,577.5)"><path d="M0.5 16.5v-5h10v5M5.5 11.5v5" fill="none" stroke="#c8d0dc" stroke-width="1"/><rect x="11" y="0.5" width="4" height="6" fill="#dce6f2" stroke="#c8d0dc"/><path d="M13 6v5" stroke="#c8d0dc"/></g><g transform="translate(247.6,577.5)"><path d="M0.5 1v4h12v-4M4.5 1v4M8.5 1v4" fill="none" stroke="#c8d0dc" stroke-width="1"/><rect x="5" y="1" width="4" height="9" fill="#f0c8d0"/><path d="M7 9v7M7 16l-1.5-2h3z" stroke="#c8d0dc" fill="#c8d0dc"/></g><g transform="translate(277.5,578.5)"><rect x="0.5" y="0.5" width="16.5" height="13" fill="#eef2f6" stroke="#c0ccdc"/><rect x="1" y="1" width="15.5" height="3" fill="#d8e2ee"/><path d="M1 6.8500000000000005h15.5M1 10.36h15.5M6.0 4v9.5M11.5 4v9.5" stroke="#c0ccdc" stroke-width="0.8"/></g><g transform="translate(301.0,578.5)"><rect x="0.5" y="0.5" width="15.5" height="13" fill="#eef2f6" stroke="#c0ccdc"/><rect x="1" y="1" width="15" height="3" fill="#d8e2ee"/></g><rect x="332.4" y="584.5" width="16" height="1.3" fill="#000"/><g transform="translate(356,578.5)"><path d="M5 10 L11 1.5 L15 4 L9 12 Z" fill="#fff" stroke="#5a6a80" stroke-width="1"/><path d="M1 12 L5 8.5 L9 11.5 L7 13.5 H2.5Z" fill="#fff" stroke="#5a6a80" stroke-width="1"/><path d="M1 14.2h14" stroke="#000" stroke-width="1.1"/></g><g transform="translate(378.4,578.5)"><rect x="0.5" y="0.5" width="16" height="14.5" fill="#fff" stroke="#3a5a98"/><rect x="1" y="1" width="15" height="3" fill="#6a8ad0"/><path d="M1 7.525h15M1 11.44h15M5.833333333333333 4v11.0M11.166666666666666 4v11.0" stroke="#3a5a98" stroke-width="0.8"/></g><text x="410.3" y="589.5" font-family="Liberation Sans" font-weight="bold" font-size="13.5" fill="#000">x</text><text x="419.2" y="590.8" font-family="Liberation Sans" font-weight="bold" font-size="6" fill="#2a5ac0">2</text><text x="434.4" y="589.5" font-family="Liberation Sans" font-weight="bold" font-size="13.5" fill="#000">x</text><text x="443.6" y="583.8" font-family="Liberation Sans" font-weight="bold" font-size="6" fill="#2a5ac0">2</text><text x="463.2" y="591" font-family="Liberation Sans" font-weight="bold" font-size="16.5" fill="#2a5ac0" textLength="14" lengthAdjust="spacingAndGlyphs">Ω</text><g transform="translate(488,577.7)"><rect x="0" y="0" width="11.8" height="14.6" fill="#3a4248"/><rect x="2.8" y="1.3" width="6.2" height="5.5" fill="#58b8e8"/><path d="M2.8 6.8 L6 3.5 L9 6.8Z" fill="#50b040"/><rect x="2.8" y="7.8" width="6.2" height="5.5" fill="#58b8e8"/><path d="M2.8 13.3 L6 10 L9 13.3Z" fill="#50b040"/><path d="M1.4 0.6v13.6M10.4 0.6v13.6" stroke="#c8d0d8" stroke-width="1" stroke-dasharray="1.2 1"/></g><defs><linearGradient id="ahr" x1="0" x2="1"><stop offset="0" stop-color="#2a58c0"/><stop offset="1" stop-color="#9ac0f0"/></linearGradient></defs><rect x="509" y="582.6" width="16" height="5" fill="url(#ahr)" stroke="#3a5a98" stroke-width="0.8"/><rect x="510" y="583.4" width="14" height="1.3" fill="#c8dcf8"/><path d="M542 581.3 l3.8 3.3 -3.8 3.3z" fill="#3a7ad0"/><path d="M549.9 580.6 H554.3 V581.9 H553.0 V590.1 H551.5999999999999 V581.9 H551.1 V590.1 H549.9 V585.6 C547.5 585.6 546.3 584.4 546.3 583.1 C546.3 581.7 547.5 580.6 549.9 580.6 Z" fill="#000"/><path d="M567.4 580.6 H571.8 V581.9 H570.5 V590.1 H569.0999999999999 V581.9 H568.6 V590.1 H567.4 V585.6 C565.0 585.6 563.8 584.4 563.8 583.1 C563.8 581.7 565.0 580.6 567.4 580.6 Z" fill="#000"/><path d="M576.3 581.3 l-3.8 3.3 3.8 3.3z" fill="#3a7ad0"/><g transform="translate(593.7,578)"><rect x="1.5" y="1.5" width="14" height="13" fill="#dde8f4" stroke="#000" stroke-width="1" stroke-dasharray="2 1"/><rect x="0" y="0" width="3" height="3" fill="#000"/><rect x="14" y="0" width="3" height="3" fill="#000"/><rect x="0" y="13" width="3" height="3" fill="#000"/><rect x="14" y="13" width="3" height="3" fill="#000"/></g><g transform="translate(617.9,578.5)"><rect x="5.5" y="5.5" width="8.5" height="8.5" fill="#e0e0e0" stroke="#c8c8c8"/><rect x="0.5" y="0.5" width="9" height="9" fill="#f0e4c0" stroke="#d8ccb0"/></g><g transform="translate(641,578.5)"><rect x="0.5" y="0.5" width="9" height="9" fill="#f0e4c0" stroke="#d8ccb0"/><rect x="5.5" y="5.5" width="8.5" height="8.5" fill="#e0e0e0" stroke="#c8c8c8"/></g><g transform="translate(664,578.5)"><path d="M3 0v7M0 3.5h7" stroke="#000" stroke-width="1.3"/><rect x="4.5" y="4.5" width="7.5" height="8" fill="#d0e4f8" stroke="#2a5aa0" stroke-width="1"/></g><g transform="translate(694,579)"><rect x="0.5" y="0.5" width="14" height="12.2" rx="1.5" fill="#fff" stroke="#2a4a88" stroke-width="1"/><defs><linearGradient id="tpl" x1="0" y1="0" x2="1" y2="1"><stop offset="0" stop-color="#8ab0f0"/><stop offset="1" stop-color="#2a5ad0"/></linearGradient></defs><rect x="2" y="2" width="11" height="9.2" fill="url(#tpl)"/><path d="M3.5 4.3h6M3.5 6.6h8M3.5 8.9h8" stroke="#e8f0ff" stroke-width="0.9"/></g></svg><!--/NOTES-->
</body></html>
